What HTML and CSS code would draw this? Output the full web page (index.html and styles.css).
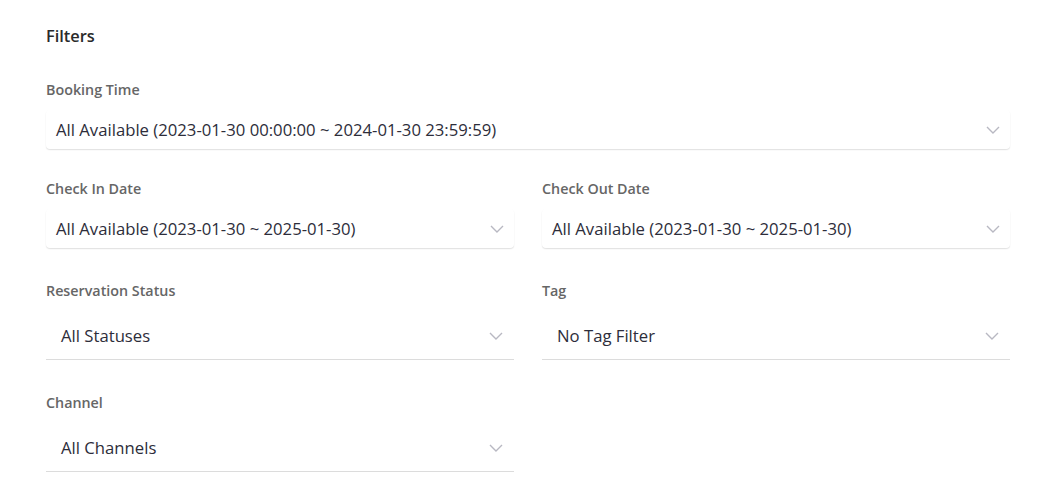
FILE: index.html
```html
<!DOCTYPE html>
<html>
<head>
<meta charset="utf-8">
<link rel="stylesheet" href="styles.css">
</head>
<body>
<div class="page">
  <h2 class="title">Filters</h2>
  <div class="grid">
    <div class="field full">
      <div class="label">Booking Time</div>
      <div class="control date"><span>All Available (2023-01-30 00:00:00 ~ 2024-01-30 23:59:59)</span>
        <svg class="chev" viewBox="0 0 14 8"><path d="M1 1l6 6 6-6"/></svg></div>
    </div>
    <div class="field">
      <div class="label">Check In Date</div>
      <div class="control date"><span>All Available (2023-01-30 ~ 2025-01-30)</span>
        <svg class="chev" viewBox="0 0 14 8"><path d="M1 1l6 6 6-6"/></svg></div>
    </div>
    <div class="field">
      <div class="label">Check Out Date</div>
      <div class="control date"><span>All Available (2023-01-30 ~ 2025-01-30)</span>
        <svg class="chev" viewBox="0 0 14 8"><path d="M1 1l6 6 6-6"/></svg></div>
    </div>
    <div class="field sel-row">
      <div class="label">Reservation Status</div>
      <div class="control select"><span>All Statuses</span>
        <svg class="chev" viewBox="0 0 14 8"><path d="M1 1l6 6 6-6"/></svg></div>
    </div>
    <div class="field sel-row">
      <div class="label">Tag</div>
      <div class="control select"><span>No Tag Filter</span>
        <svg class="chev" viewBox="0 0 14 8"><path d="M1 1l6 6 6-6"/></svg></div>
    </div>
    <div class="field sel-row">
      <div class="label">Channel</div>
      <div class="control select"><span>All Channels</span>
        <svg class="chev" viewBox="0 0 14 8"><path d="M1 1l6 6 6-6"/></svg></div>
    </div>
  </div>
</div>
</body>
</html>
```

FILE: styles.css
```css
* { box-sizing: border-box; }
body {
  margin: 0;
  background: #fff;
  font-family: "Open Sans", "Noto Sans", sans-serif;
  color: #333;
}
.page {
  width: 1010px;
  padding: 24px 0 0 46px;
}
.title {
  margin: 0 0 32px;
  font-size: 16.4px;
  line-height: 24px;
  font-weight: 600;
  color: #2a2a2a;
}
.grid {
  display: grid;
  grid-template-columns: 468px 468px;
  column-gap: 28px;
  row-gap: 30px;
}
.full { grid-column: 1 / -1; }
.sel-row { margin-top: 3px; }
.label {
  font-size: 14.3px;
  line-height: 20px;
  font-weight: 600;
  color: #666;
  margin-bottom: 10px;
}
.control {
  display: flex;
  align-items: center;
  justify-content: space-between;
  font-size: 16.7px;
  color: #2d2d3a;
}
.control.date {
  height: 39px;
  padding: 0 10px;
  border-radius: 4px;
  box-shadow: 0 1px 1px rgba(0,0,0,0.08), 0 1px 2px rgba(0,0,0,0.05);
}
.control.select {
  height: 49px;
  padding: 1px 11px 0 15px;
  border-bottom: 1px solid #dcdcdc;
}
.chev {
  width: 14px;
  height: 8px;
  fill: none;
  stroke: #b8b8c2;
  stroke-width: 1.4;
}
```
